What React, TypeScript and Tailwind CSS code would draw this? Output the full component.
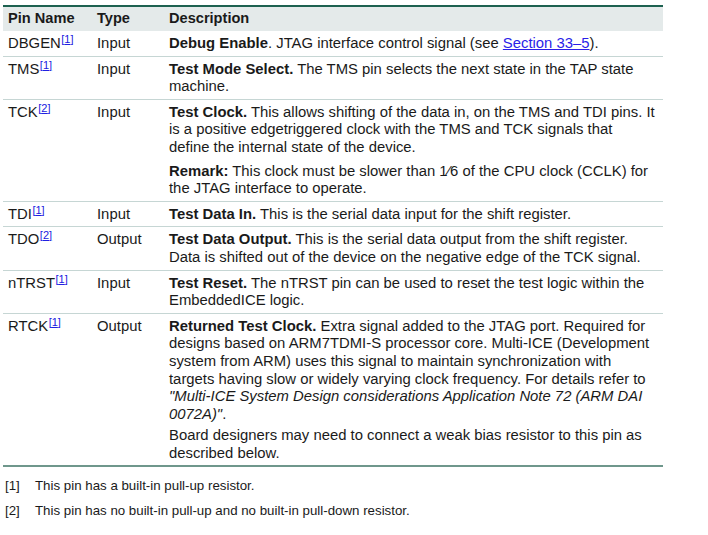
import React from "react";

const Ref = ({ n }: { n: string }) => (
  <span className="text-[11px] leading-none text-[#2020e0] underline relative -top-[5px] ml-[0.5px] align-baseline">[{n}]</span>
);

type Row = { pin: string; note: string; type: string; desc: React.ReactNode };

const rows: Row[] = [
  {
    pin: "DBGEN",
    note: "1",
    type: "Input",
    desc: (
      <p>
        <b>Debug Enable</b>. JTAG interface control signal (see{" "}
        <span className="text-[#2a1ee8] underline">Section 33–5</span>).
      </p>
    ),
  },
  {
    pin: "TMS",
    note: "1",
    type: "Input",
    desc: (
      <p>
        <b>Test Mode Select.</b> The TMS pin selects the next state in the TAP state machine.
      </p>
    ),
  },
  {
    pin: "TCK",
    note: "2",
    type: "Input",
    desc: (
      <>
        <p>
          <b>Test Clock.</b> This allows shifting of the data in, on the TMS and TDI pins. It is a
          positive edgetriggered clock with the TMS and TCK signals that define the internal state
          of the device.
        </p>
        <p className="mt-[6px]">
          <b>Remark:</b> This clock must be slower than 1⁄6 of the CPU clock (CCLK) for the JTAG
          interface to operate.
        </p>
      </>
    ),
  },
  {
    pin: "TDI",
    note: "1",
    type: "Input",
    desc: (
      <p>
        <b>Test Data In.</b> This is the serial data input for the shift register.
      </p>
    ),
  },
  {
    pin: "TDO",
    note: "2",
    type: "Output",
    desc: (
      <p>
        <b>Test Data Output.</b> This is the serial data output from the shift register. Data is
        shifted out of the device on the negative edge of the TCK signal.
      </p>
    ),
  },
  {
    pin: "nTRST",
    note: "1",
    type: "Input",
    desc: (
      <p>
        <b>Test Reset.</b> The nTRST pin can be used to reset the test logic within the
        EmbeddedICE logic.
      </p>
    ),
  },
  {
    pin: "RTCK",
    note: "1",
    type: "Output",
    desc: (
      <>
        <p>
          <b>Returned Test Clock.</b> Extra signal added to the JTAG port. Required for designs
          based on ARM7TDMI-S processor core. Multi-ICE (Development system from ARM) uses this
          signal to maintain synchronization with targets having slow or widely varying clock
          frequency. For details refer to{" "}
          <i>"Multi-ICE System Design considerations Application Note 72 (ARM DAI 0072A)"</i>.
        </p>
        <p className="mt-[4px]">
          Board designers may need to connect a weak bias resistor to this pin as described below.
        </p>
      </>
    ),
  },
];

export default function App() {
  return (
    <div
      className="w-[708px] h-[535px] bg-white text-[#1a1a1a] pt-[5px]"
      style={{ fontFamily: '"Liberation Sans", Arial, sans-serif' }}
    >
      <div className="ml-[3px] w-[660px]">
        <div className="border-t-2 border-[#1d6150] bg-[#e4eaea] flex h-[26px] items-center text-[14.6px] font-bold">
          <div className="w-[89px] pl-[5px]">Pin Name</div>
          <div className="w-[72px] pl-[5px]">Type</div>
          <div className="flex-1 pl-[5px]">Description</div>
        </div>
        {rows.map((r, i) => (
          <div
            key={r.pin}
            className={
              "flex text-[14.85px] leading-[17.6px] pt-[4px] pb-[3px] " +
              (i === rows.length - 1
                ? "border-b-2 border-[#6f978c]"
                : "border-b border-[#c6d6d4]")
            }
          >
            <div className="w-[89px] pl-[5px]">
              {r.pin}
              <Ref n={r.note} />
            </div>
            <div className="w-[72px] pl-[5px]">{r.type}</div>
            <div className="flex-1 pl-[5px] pr-[7px]">{r.desc}</div>
          </div>
        ))}
        <div className="text-[13.3px] mt-[11px] leading-[16px]">
          <div className="flex">
            <span className="w-[32px] pl-[2px]">[1]</span>
            <span>This pin has a built-in pull-up resistor.</span>
          </div>
          <div className="flex mt-[9px]">
            <span className="w-[32px] pl-[2px]">[2]</span>
            <span>This pin has no built-in pull-up and no built-in pull-down resistor.</span>
          </div>
        </div>
      </div>
    </div>
  );
}
